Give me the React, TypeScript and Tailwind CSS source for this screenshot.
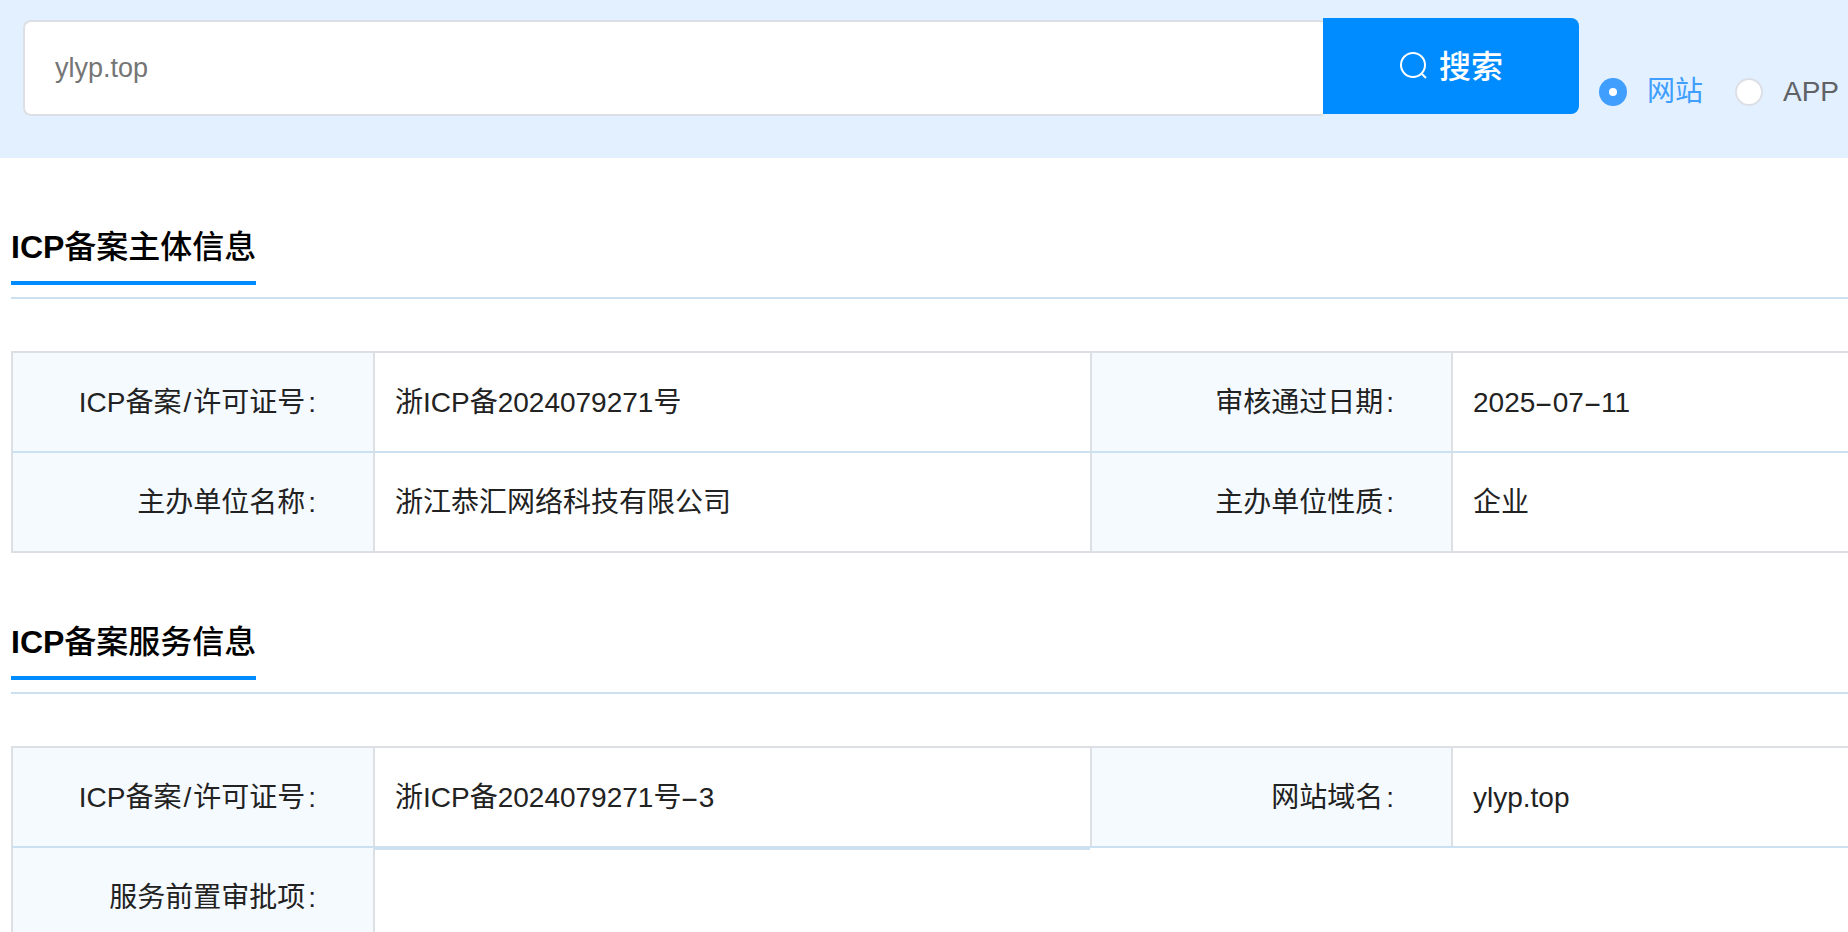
import React from 'react';

// the hyphen in the reference is drawn much longer than the Liberation one
const Dashed = ({ text }: { text: string }) => (
  <>
    {text.split('-').map((part, i) => (
      <React.Fragment key={i}>
        {i > 0 && <span className="inline-block mx-[4px] scale-x-[2]">-</span>}
        {part}
      </React.Fragment>
    ))}
  </>
);

const Label = ({ text, top = 'border-t-[#dcdfe3]' }: { text: string; top?: string }) => (
  <div className={`h-[100px] border-t-2 border-l-2 border-l-[#dcdfe3] bg-[#f5faff] flex items-center justify-end pr-[57px] ${top}`}>
    <span className="text-[28px] text-[#222222] pt-[2px]">
      {text.split('/').map((part, i) => (
        <React.Fragment key={i}>
          {i > 0 && <span className="mx-[2px]">/</span>}
          {part}
        </React.Fragment>
      ))}
      <span className="ml-[3px]">:</span>
    </span>
  </div>
);

const Value = ({ text, top = 'border-t-[#dcdfe3]' }: { text: string; top?: string }) => (
  <div className={`h-[100px] border-t-2 border-l-2 border-l-[#dcdfe3] bg-white flex items-center pl-[20px] ${top}`}>
    <span className="text-[28px] text-[#222222] whitespace-nowrap pt-[2px]">
      <Dashed text={text} />
    </span>
  </div>
);

const SectionTitle = ({ title }: { title: string }) => (
  <div className="pt-[64px] border-b-2 border-[#cbe0f0] pb-[12px]">
    <div className="w-[245px] h-[63px] border-b-4 border-[#008cff] text-[32px] leading-[50px] font-medium text-black whitespace-nowrap">
      <span className="font-semibold">ICP</span>
      {title}
    </div>
  </div>
);

const Radio = ({ text, checked }: { text: string; checked?: boolean }) => (
  <div className="flex items-center">
    {checked ? (
      <span className="w-[28px] h-[28px] rounded-full bg-[#409eff] flex items-center justify-center">
        <span className="w-[8px] h-[8px] rounded-full bg-white" />
      </span>
    ) : (
      <span className="w-[28px] h-[28px] rounded-full bg-white border-2 border-[#dcdfe6]" />
    )}
    <span className={`ml-[20px] text-[28px] leading-[28px] ${checked ? 'text-[#409eff]' : 'text-[#606266]'}`}>{text}</span>
  </div>
);

const cols = 'grid grid-cols-[362px_717px_361px_1fr]';

export default function App() {
  return (
    <div className="h-screen overflow-hidden bg-white font-['Liberation_Sans','Noto_Sans_CJK_SC',sans-serif]">
      <div className="h-[158px] bg-[#e2f0ff] pl-[23px] pt-[18px] flex items-start">
        <div className="w-[1300px] h-[96px] mt-[2px] bg-white border-2 border-[#dcdfe3] border-r-0 rounded-l-lg flex items-center pl-[30px]">
          <input
            type="text"
            placeholder="ylyp.top"
            className="w-full outline-none bg-transparent text-[27px] placeholder:text-[#757575]"
          />
        </div>
        <button className="w-[256px] h-[96px] bg-[#008cff] rounded-r-lg text-white flex items-center justify-center">
          <svg width="30" height="30" viewBox="0 0 30 30" fill="none" stroke="currentColor" strokeWidth="2">
            <circle cx="14" cy="14" r="12" />
            <path d="M23 23l4 4" />
          </svg>
          <span className="ml-[10px] text-[32px] leading-[40px] font-medium pt-[2px]">搜索</span>
        </button>
        <div className="mt-[60px] ml-[20px] flex gap-[32px]">
          <Radio text="网站" checked />
          <Radio text="APP" />
        </div>
      </div>

      <div className="pl-[11px]">
        <SectionTitle title="备案主体信息" />
        <div className={`mt-[52px] border-b-2 border-[#dcdfe3] ${cols}`}>
          <Label text="ICP备案/许可证号" />
          <Value text="浙ICP备2024079271号" />
          <Label text="审核通过日期" />
          <Value text="2025-07-11" />
          <Label text="主办单位名称" top="border-t-[#cbe0f0]" />
          <Value text="浙江恭汇网络科技有限公司" top="border-t-[#cbe0f0]" />
          <Label text="主办单位性质" top="border-t-[#cbe0f0]" />
          <Value text="企业" top="border-t-[#cbe0f0]" />
        </div>

        <SectionTitle title="备案服务信息" />
        <div className={`mt-[52px] ${cols}`}>
          <Label text="ICP备案/许可证号" />
          <Value text="浙ICP备2024079271号-3" />
          <Label text="网站域名" />
          <Value text="ylyp.top" />
          <Label text="服务前置审批项" top="border-t-[#cbe0f0]" />
          <div className="h-[100px] border-t-4 border-t-[#cbe0f0] border-l-2 border-l-[#dcdfe3] bg-white" />
          <div className="col-span-2 border-t-2 border-[#cbe0f0]" />
        </div>
      </div>
    </div>
  );
}
